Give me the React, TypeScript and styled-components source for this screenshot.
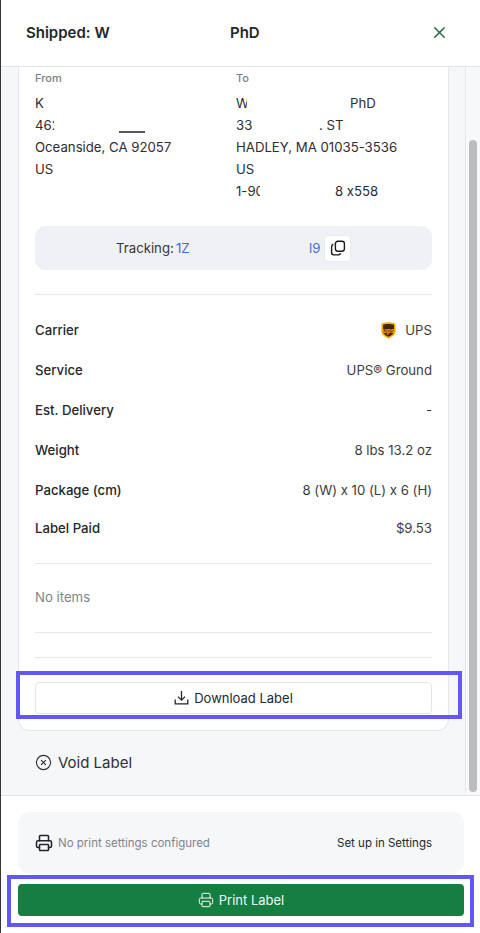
import React from "react";
import styled, { createGlobalStyle } from "styled-components";
import { X, CircleX, Printer } from "lucide-react";

const Global = createGlobalStyle`
  html, body { margin: 0; padding: 0; background: #fff; }
  body {
    font-family: Inter, "Liberation Sans", sans-serif;
    font-feature-settings: "calt" 0;
    color: #20242a;
    overflow: hidden;
  }
  * { box-sizing: border-box; }
`;

const Shell = styled.div`
  position: relative;
  width: 480px;
  height: 933px;
  display: flex;
  flex-direction: column;
  background: #fff;
  border-left: 1px solid #33363a;
  overflow: hidden;
`;

const Header = styled.header`
  height: 67px;
  flex: none;
  display: flex;
  align-items: center;
  justify-content: space-between;
  padding: 0 31px 2px 25px;
  border-bottom: 1px solid #e2e4ea;
`;

const Title = styled.h1`
  display: flex;
  margin: 0;
  font-size: 15px;
  font-weight: 600;
  color: #24272c;
`;

const TitleStart = styled.span`
  width: 204px;
`;

const CloseButton = styled.span`
  display: flex;
  color: #1f6a44;
`;

const Scroller = styled.div`
  height: 729px;
  flex: none;
  display: flex;
  background: #f6f7f9;
  border-bottom: 1px solid #e2e4ea;
  overflow: hidden;
`;

const Content = styled.div`
  flex: 1;
  min-width: 0;
  padding-left: 17px;
  padding-right: 16px;
`;

const Card = styled.section`
  background: #fff;
  border: 1px solid #e5e7ec;
  border-top: 0;
  border-radius: 0 0 12px 12px;
  padding: 4px 16px 16px;
  height: 664px;
`;

const Addresses = styled.div`
  display: grid;
  grid-template-columns: 201px 1fr;
`;

const Address = styled.div`
  display: flex;
  flex-direction: column;
`;

const AddressHead = styled.div`
  font-size: 11px;
  line-height: 14px;
  font-weight: 500;
  color: #7a7f87;
  margin-bottom: 7px;
`;

const Line = styled.div`
  position: relative;
  display: flex;
  height: 22px;
  font-size: 13.2px;
  line-height: 22px;
  white-space: nowrap;
  color: #2b2e33;
`;

const Clip = styled.span<{ $w: number }>`
  display: block;
  width: ${(p) => p.$w}px;
  flex: none;
  overflow: hidden;
`;

const Mark = styled.span`
  position: absolute;
  left: 84px;
  top: 17px;
  width: 26px;
  height: 2px;
  background: #55585c;
`;

const TrackingBox = styled.div`
  height: 44px;
  margin-top: 24px;
  display: flex;
  align-items: center;
  justify-content: center;
  background: #f0f1f5;
  border-radius: 10px;
  font-size: 13.2px;
  color: #33363b;
`;

const TrackingLabel = styled.span`
  width: 60px;
`;

const TrackingLink = styled.span<{ $w: number }>`
  width: ${(p) => p.$w}px;
  color: #3b6fdc;
  flex: none;
`;

const CopyButton = styled.span`
  width: 27px;
  height: 27px;
  margin-left: 5px;
  display: flex;
  align-items: center;
  justify-content: center;
  background: #fff;
  border: 1px solid #e8eaee;
  border-radius: 4px;
  color: #17191c;
`;

const Rule = styled.hr<{ $top: number; $bottom?: number }>`
  margin: ${(p) => p.$top}px 0 ${(p) => p.$bottom ?? 0}px;
  border: 0;
  border-top: 1px solid #e5e7ec;
`;

const Rows = styled.div`
  display: flex;
  flex-direction: column;
  margin-top: 15px;
`;

const Row = styled.div<{ $h?: number }>`
  height: ${(p) => p.$h ?? 40}px;
  display: flex;
  align-items: center;
  justify-content: space-between;
  font-size: 13.2px;
`;

const RowLabel = styled.span`
  font-weight: 500;
  color: #24272c;
`;

const RowValue = styled.span`
  display: flex;
  align-items: center;
  gap: 9px;
  color: #3a3d42;
`;

const Empty = styled.div`
  height: 68px;
  padding-bottom: 2px;
  display: flex;
  align-items: center;
  font-size: 13.2px;
  color: #7f848c;
`;

const DownloadButton = styled.button`
  width: 100%;
  height: 32px;
  margin-top: 24px;
  padding-bottom: 2px;
  display: flex;
  align-items: center;
  justify-content: center;
  gap: 5px;
  background: #fff;
  border: 1px solid #e2e4e9;
  border-radius: 4px;
  font: 400 13px Inter, sans-serif;
  font-feature-settings: "calt" 0;
  color: #24272c;
`;

const VoidLink = styled.div`
  height: 62px;
  display: flex;
  align-items: center;
  gap: 6px;
  padding: 0 0 0 17px;
  font-size: 15px;
  color: #2e3135;
`;

const Rail = styled.div`
  width: 15px;
  flex: none;
  padding: 73px 3px 3px 3px;
  border-left: 1px solid #e6e8ec;
  background: #f7f8fa;
`;

const Thumb = styled.div`
  width: 8px;
  height: 652px;
  border-radius: 4px;
  background: #bdbdbd;
`;

const Footer = styled.footer`
  flex: 1;
  padding: 16px 16px 0 17px;
  display: flex;
  flex-direction: column;
`;

const SettingsBox = styled.div`
  height: 62px;
  display: flex;
  align-items: center;
  justify-content: space-between;
  padding: 0 32px 0 17px;
  background: #f6f7f9;
  border-radius: 12px;
`;

const SettingsNote = styled.span`
  display: flex;
  align-items: center;
  gap: 5px;
  font-size: 11.5px;
  color: #7f848c;
`;

const SettingsIcon = styled.span`
  display: flex;
  color: #20242a;
`;

const SettingsLink = styled.span`
  font-size: 11.5px;
  font-weight: 400;
  color: #24272c;
`;

const PrintButton = styled.button`
  height: 32px;
  margin-top: 10px;
  padding-bottom: 1px;
  display: flex;
  align-items: center;
  justify-content: center;
  gap: 5px;
  background: #157f42;
  border: 0;
  border-radius: 4px;
  font: 400 13px Inter, sans-serif;
  font-feature-settings: "calt" 0;
  color: #f1f8f4;
`;

const Highlight = styled.div<{ $x: number; $y: number; $w: number; $h: number }>`
  position: absolute;
  left: ${(p) => p.$x}px;
  top: ${(p) => p.$y}px;
  width: ${(p) => p.$w}px;
  height: ${(p) => p.$h}px;
  border: 4px solid #6257fb;
  pointer-events: none;
`;

const CopyIcon = () => (
  <svg width="16" height="16" viewBox="0 0 16 16" fill="none" stroke="currentColor" strokeWidth="1.4">
    <rect x="5.4" y="1.2" width="9" height="10" rx="2.4" />
    <path d="M3.4 4.2 C2 4.8 1.6 5.6 1.6 7 V12.4 C1.6 14 2.6 14.9 4.2 14.9 H8.2 C9.4 14.9 10.2 14.4 10.7 13.4" />
  </svg>
);

const DownloadIcon = () => (
  <svg width="15" height="15" viewBox="0 0 15 15" fill="none" stroke="currentColor" strokeWidth="1.3">
    <path d="M7.5 1 V10" />
    <path d="M3.9 6.6 L7.5 10.2 L11.1 6.6" />
    <path d="M1.2 9.6 V13.9 H13.8 V9.6" />
  </svg>
);

const UpsLogo = () => (
  <svg width="15" height="17" viewBox="0 0 15 17">
    <path d="M7.5 0.3 C10 0.3 12.6 0.8 14.6 1.8 V9.6 C14.6 13 11 15.2 7.5 16.7 C4 15.2 0.4 13 0.4 9.6 V1.8 C2.4 0.8 5 0.3 7.5 0.3 Z" fill="#f7ae00" />
    <path d="M7.5 2 C9.8 2 11.6 2.3 13 3 V9.2 C13 11.8 10.2 13.6 7.5 14.8 C4.8 13.6 2 11.8 2 9.2 V3 C3.4 2.3 5.2 2 7.5 2 Z" fill="#43280f" />
    <text x="7.5" y="10.6" textAnchor="middle" fontFamily="Liberation Sans, sans-serif" fontSize="6.5" fontWeight="700" fill="#f7b500">ups</text>
  </svg>
);

export default function App() {
  return (
    <>
      <Global />
      <Shell>
        <Header>
          <Title>
            <TitleStart>Shipped: W</TitleStart>
            <span>PhD</span>
          </Title>
          <CloseButton>
            <X size={19} strokeWidth={1.8} />
          </CloseButton>
        </Header>
        <Scroller>
          <Content>
            <Card>
              <Addresses>
                <Address>
                  <AddressHead>From</AddressHead>
                  <Line>K</Line>
                  <Line>
                    <Clip $w={19}>462</Clip>
                    <Mark />
                  </Line>
                  <Line>Oceanside, CA 92057</Line>
                  <Line>US</Line>
                </Address>
                <Address>
                  <AddressHead>To</AddressHead>
                  <Line>
                    <Clip $w={114}>
                      <Clip $w={11}>W</Clip>
                    </Clip>
                    PhD
                  </Line>
                  <Line>
                    <Clip $w={83}>33</Clip>. ST
                  </Line>
                  <Line>HADLEY, MA 01035-3536</Line>
                  <Line>US</Line>
                  <Line>
                    <Clip $w={99}>
                      <Clip $w={24}>1-90</Clip>
                    </Clip>
                    8 x558
                  </Line>
                </Address>
              </Addresses>
              <TrackingBox>
                <TrackingLabel>Tracking:</TrackingLabel>
                <TrackingLink $w={133}>1Z</TrackingLink>
                <TrackingLink $w={10}>l9</TrackingLink>
                <CopyButton>
                  <CopyIcon />
                </CopyButton>
              </TrackingBox>
              <Rule $top={24} />
              <Rows>
                <Row>
                  <RowLabel>Carrier</RowLabel>
                  <RowValue>
                    <UpsLogo />
                    UPS
                  </RowValue>
                </Row>
                <Row>
                  <RowLabel>Service</RowLabel>
                  <RowValue>UPS® Ground</RowValue>
                </Row>
                <Row>
                  <RowLabel>Est. Delivery</RowLabel>
                  <RowValue>-</RowValue>
                </Row>
                <Row>
                  <RowLabel>Weight</RowLabel>
                  <RowValue>8 lbs 13.2 oz</RowValue>
                </Row>
                <Row>
                  <RowLabel>Package (cm)</RowLabel>
                  <RowValue>8 (W) x 10 (L) x 6 (H)</RowValue>
                </Row>
                <Row $h={36}>
                  <RowLabel>Label Paid</RowLabel>
                  <RowValue>$9.53</RowValue>
                </Row>
              </Rows>
              <Rule $top={17} />
              <Empty>No items</Empty>
              <Rule $top={0} />
              <Rule $top={24} />
              <DownloadButton>
                <DownloadIcon />
                Download Label
              </DownloadButton>
            </Card>
            <VoidLink>
              <CircleX size={17} strokeWidth={1.6} />
              Void Label
            </VoidLink>
          </Content>
          <Rail>
            <Thumb />
          </Rail>
        </Scroller>
        <Footer>
          <SettingsBox>
            <SettingsNote>
              <SettingsIcon>
                <Printer size={18} strokeWidth={2} />
              </SettingsIcon>
              No print settings configured
            </SettingsNote>
            <SettingsLink>Set up in Settings</SettingsLink>
          </SettingsBox>
          <PrintButton>
            <Printer size={16} strokeWidth={1.5} />
            Print Label
          </PrintButton>
        </Footer>
        <Highlight $x={15} $y={671} $w={446} $h={48} />
        <Highlight $x={6} $y={875} $w={467} $h={52} />
      </Shell>
    </>
  );
}
